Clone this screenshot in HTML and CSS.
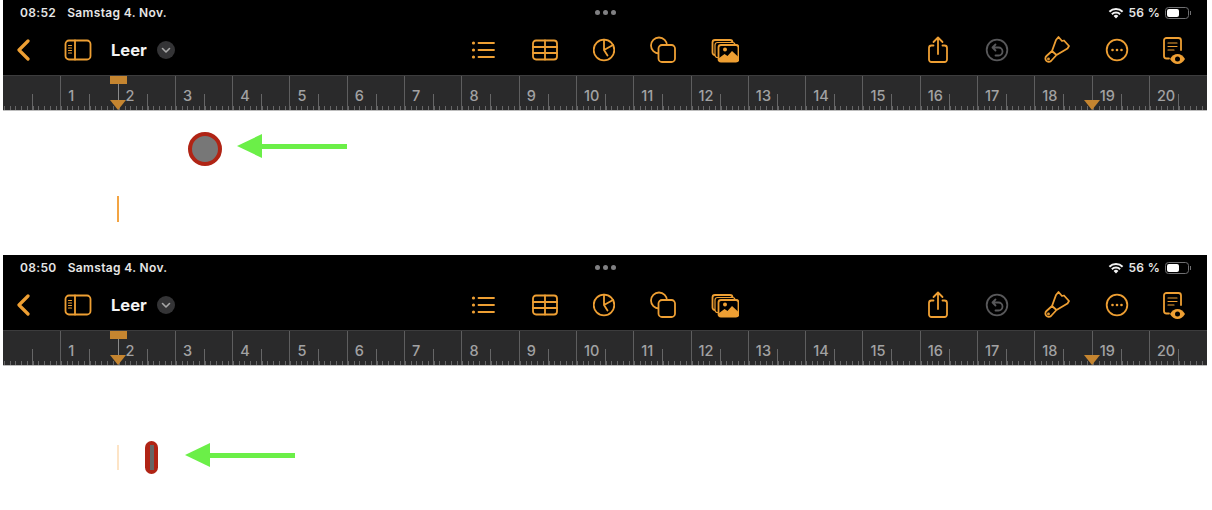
FILE: index.html
```html
<!DOCTYPE html>
<html lang="de">
<head>
<meta charset="utf-8">
<title>Leer</title>
<link rel="stylesheet" href="styles.css">
</head>
<body>
<svg class="defs" aria-hidden="true">
  <symbol id="i-back" viewBox="0 0 14 28"><path class="s3" d="M12 5 3 14l9 9"/></symbol>
  <symbol id="i-side" viewBox="0 0 28 28"><rect class="s" x="1.500" y="4.500" width="25" height="19" rx="3.500"/><path class="s" d="M11 4.500v19"/><path class="s1" d="M4.500 9.500h3M4.500 12h3M4.500 14.500h3M4.500 17h3"/></symbol>
  <symbol id="i-chev" viewBox="0 0 18 18"><circle cx="9" cy="9" r="9" fill="#343436"/><path d="m5.500 7.500 3.500 3.500 3.500-3.500" fill="none" stroke="#a8a8a8" stroke-width="1.600" stroke-linecap="round" stroke-linejoin="round"/></symbol>
  <symbol id="i-list" viewBox="0 0 28 28"><circle class="f" cx="4.500" cy="7" r="1.600"/><circle class="f" cx="4.500" cy="14" r="1.600"/><circle class="f" cx="4.500" cy="21" r="1.600"/><path class="s" d="M9.500 7H25M9.500 14H25M9.500 21H25"/></symbol>
  <symbol id="i-table" viewBox="0 0 26 28"><rect class="s" x="1" y="4.500" width="24" height="19" rx="3"/><path class="s" d="M1 11h24M1 17h24M13 4.500v19"/></symbol>
  <symbol id="i-chart" viewBox="0 0 22 28"><circle class="s" cx="11" cy="14" r="10.300"/><path class="s" d="M11 3.700V14l3.500 5.500M11 14l9-5"/></symbol>
  <symbol id="i-shapes" viewBox="0 0 26 28"><circle class="s" cx="9" cy="9.500" r="8"/><rect class="sb" x="8.500" y="9" width="16.500" height="17" rx="3.500"/></symbol>
  <symbol id="i-media" viewBox="0 0 28 28"><rect class="s" x="1.500" y="4" width="20" height="15" rx="2.500"/><rect class="sb1" x="4" y="6.500" width="20" height="15" rx="2.500"/><rect class="sb" x="7.500" y="9" width="20" height="16.500" rx="2.500"/><circle class="f" cx="14" cy="13.500" r="2"/><path class="f" d="M7.500 22.500 13.500 18l3 2 4.500-5 6.500 6v2a2.500 2.500 0 0 1-2.500 2.500H10a2.500 2.500 0 0 1-2.500-2.500z"/></symbol>
  <symbol id="i-share" viewBox="0 0 26 28"><path class="s" d="M8.500 9.500H6.500a2.500 2.500 0 0 0-2.500 2.500v11.500a2.500 2.500 0 0 0 2.500 2.500h13a2.500 2.500 0 0 0 2.500-2.500V12a2.500 2.500 0 0 0-2.500-2.500h-2M13 18V2M8.500 6 13 1.500 17.500 6"/></symbol>
  <symbol id="i-undo" viewBox="0 0 28 28"><circle class="sg" cx="14" cy="14" r="10.300"/><path class="sg" d="M12.500 8.500 9.500 11.500l3 3M9.500 11.500h6a3.500 3.500 0 0 1 0 8h-3"/></symbol>
  <symbol id="i-brush" viewBox="0 0 28 28"><path class="s" d="M9 15 13 4l2.500-3 3.500 4 2-.500 5 5.500-1.500 2.500-11 6.500zM9 15l-5.500 5a3.200 3.200 0 0 0 4.500 5l5.500-6"/><circle class="s1" cx="5.500" cy="23" r=".8"/></symbol>
  <symbol id="i-more" viewBox="0 0 28 28"><circle class="s" cx="14" cy="14" r="10.300"/><circle class="f" cx="9.500" cy="14" r="1.300"/><circle class="f" cx="14" cy="14" r="1.300"/><circle class="f" cx="18.500" cy="14" r="1.300"/></symbol>
  <symbol id="i-doc" viewBox="0 0 22 28"><path class="s" d="M6 22.500H3.500A2.500 2.500 0 0 1 1 20V4.500A2.500 2.500 0 0 1 3.500 2h12A2.500 2.500 0 0 1 18 4.500V14"/><path class="s1" d="M5 7h9M5 10.500h9M5 14h6"/><path class="f" d="M7 23c2-3.200 4.500-5 7.500-5s5.500 1.800 7.500 5c-2 3.200-4.500 5-7.500 5s-5.500-1.800-7.500-5z"/><circle cx="14.500" cy="23" r="2.500" fill="#000"/></symbol>
  <symbol id="i-wifi" viewBox="0 0 16 12"><path d="M8 11.500 5.600 9a3.400 3.400 0 0 1 4.800 0zM4.500 7.900 3.200 6.600a6.800 6.800 0 0 1 9.600 0l-1.300 1.300a5 5 0 0 0-7 0zM2.100 5.500.7 4.100a10.300 10.300 0 0 1 14.600 0l-1.400 1.400a8.400 8.400 0 0 0-11.800 0z" fill="#f2f2f2"/></symbol>
</svg>

<section class="shot">
  <div class="device">
    <div class="status">
      <div class="status-left"><span>08:52</span><span>Samstag 4. Nov.</span></div>
      <div class="dots"><i></i><i></i><i></i></div>
      <div class="status-right">
        <svg class="wifi"><use href="#i-wifi"/></svg><span>56 %</span>
        <div class="battery"><div class="battery-level"></div></div><div class="battery-nub"></div>
      </div>
    </div>
    <div class="toolbar">
      <div class="tools-left">
        <svg class="w14"><use href="#i-back"/></svg>
        <svg class="w28 side"><use href="#i-side"/></svg>
        <span class="doc-title">Leer</span>
        <svg class="chev"><use href="#i-chev"/></svg>
      </div>
      <div class="tools-center">
        <svg class="w28"><use href="#i-list"/></svg>
        <svg class="w26"><use href="#i-table"/></svg>
        <svg class="w22"><use href="#i-chart"/></svg>
        <svg class="w26"><use href="#i-shapes"/></svg>
        <svg class="w28"><use href="#i-media"/></svg>
      </div>
      <div class="tools-right">
        <svg class="w26"><use href="#i-share"/></svg>
        <svg class="w28"><use href="#i-undo"/></svg>
        <svg class="w28"><use href="#i-brush"/></svg>
        <svg class="w28"><use href="#i-more"/></svg>
        <svg class="w22"><use href="#i-doc"/></svg>
      </div>
    </div>
    <div class="ruler">
      <div class="cell first"></div>
      <div class="cell">1</div><div class="cell">2</div><div class="cell">3</div><div class="cell">4</div><div class="cell">5</div>
      <div class="cell">6</div><div class="cell">7</div><div class="cell">8</div><div class="cell">9</div><div class="cell">10</div>
      <div class="cell">11</div><div class="cell">12</div><div class="cell">13</div><div class="cell">14</div><div class="cell">15</div>
      <div class="cell">16</div><div class="cell">17</div><div class="cell">18</div><div class="cell">19</div><div class="cell">20</div>
      <div class="tab-block"></div>
      <div class="tab-line"></div>
      <div class="marker marker-left"></div>
      <div class="marker marker-right"></div>
    </div>
  </div>
  <div class="caret caret-a"></div>
  <div class="cap cap-round"></div>
  <div class="arrow arrow-a"><div class="arrow-head"></div><div class="arrow-shaft"></div></div>
</section>

<section class="shot">
  <div class="device">
    <div class="status">
      <div class="status-left"><span>08:50</span><span>Samstag 4. Nov.</span></div>
      <div class="dots"><i></i><i></i><i></i></div>
      <div class="status-right">
        <svg class="wifi"><use href="#i-wifi"/></svg><span>56 %</span>
        <div class="battery"><div class="battery-level"></div></div><div class="battery-nub"></div>
      </div>
    </div>
    <div class="toolbar">
      <div class="tools-left">
        <svg class="w14"><use href="#i-back"/></svg>
        <svg class="w28 side"><use href="#i-side"/></svg>
        <span class="doc-title">Leer</span>
        <svg class="chev"><use href="#i-chev"/></svg>
      </div>
      <div class="tools-center">
        <svg class="w28"><use href="#i-list"/></svg>
        <svg class="w26"><use href="#i-table"/></svg>
        <svg class="w22"><use href="#i-chart"/></svg>
        <svg class="w26"><use href="#i-shapes"/></svg>
        <svg class="w28"><use href="#i-media"/></svg>
      </div>
      <div class="tools-right">
        <svg class="w26"><use href="#i-share"/></svg>
        <svg class="w28"><use href="#i-undo"/></svg>
        <svg class="w28"><use href="#i-brush"/></svg>
        <svg class="w28"><use href="#i-more"/></svg>
        <svg class="w22"><use href="#i-doc"/></svg>
      </div>
    </div>
    <div class="ruler">
      <div class="cell first"></div>
      <div class="cell">1</div><div class="cell">2</div><div class="cell">3</div><div class="cell">4</div><div class="cell">5</div>
      <div class="cell">6</div><div class="cell">7</div><div class="cell">8</div><div class="cell">9</div><div class="cell">10</div>
      <div class="cell">11</div><div class="cell">12</div><div class="cell">13</div><div class="cell">14</div><div class="cell">15</div>
      <div class="cell">16</div><div class="cell">17</div><div class="cell">18</div><div class="cell">19</div><div class="cell">20</div>
      <div class="tab-block"></div>
      <div class="tab-line"></div>
      <div class="marker marker-left"></div>
      <div class="marker marker-right"></div>
    </div>
  </div>
  <div class="caret caret-b"></div>
  <div class="cap cap-slim"><div class="cap-core"></div></div>
  <div class="arrow arrow-b"><div class="arrow-head"></div><div class="arrow-shaft"></div></div>
</section>
</body>
</html>
```

FILE: styles.css
```css
* { box-sizing: border-box; }
html, body { margin: 0; padding: 0; background: #fff; overflow: hidden; }
body { font-family: Inter, "Liberation Sans", sans-serif; }

.defs { position: absolute; width: 0; height: 0; }

.f { fill: #ee9f33; }
.s, .s1, .s3, .sb, .sb1, .sg { fill: none; stroke: #ee9f33; stroke-width: 1.800; stroke-linecap: round; stroke-linejoin: round; }
.s1 { stroke-width: 1.200; }
.s3 { stroke-width: 3.200; }
.sb { fill: #000; }
.sb1 { fill: #000; stroke-width: 1.200; }
.sg { stroke: #58585a; }

.shot { position: relative; height: 255px; }
.device { width: 1204px; margin-left: 3px; background: #000; }

.status {
  height: 25px;
  display: grid;
  grid-template-columns: 1fr auto 1fr;
  align-items: center;
  color: #e6e6e6;
  font-size: 12px;
  font-weight: 600;
}
.status-left { display: flex; gap: 11px; padding-left: 17px; letter-spacing: .35px; }
.dots { display: flex; gap: 3px; }
.dots i { display: block; width: 5px; height: 5px; border-radius: 50%; background: #808082; }
.status-right { display: flex; align-items: center; justify-content: flex-end; padding-right: 16px; font-size: 12px; letter-spacing: .3px; }
.wifi { width: 16px; height: 12px; margin-right: 5px; }
.battery { width: 24px; height: 12px; border: 1px solid #707072; border-radius: 3.500px; padding: 1px; margin-left: 5px; }
.battery-level { width: 12px; height: 100%; background: #fff; border-radius: 2px; }
.battery-nub { width: 1px; height: 4px; margin-left: 1px; background: #707072; }

.toolbar {
  height: 50px;
  display: grid;
  grid-template-columns: 466px 1fr auto;
  align-items: center;
}
.toolbar svg { display: block; height: 28px; overflow: visible; }
.w14 { width: 14px; }
.w22 { width: 22px; }
.w26 { width: 26px; }
.w28 { width: 28px; }

.tools-left { display: flex; align-items: center; padding-left: 13px; }
.side { margin-left: 34px; }
.doc-title { margin-left: 19px; color: #f4f4f4; font-size: 16.500px; font-weight: 700; width: 37px; white-space: nowrap; }
.toolbar .chev { width: 18px; height: 18px; margin-left: 9px; }
.tools-center { display: flex; gap: 35px; }
.tools-right { display: flex; gap: 32px; padding-right: 22px; }

.ruler {
  position: relative;
  height: 36px;
  display: flex;
  background: #2a2a2b;
  border-top: 1px solid #3c3c3d;
  border-bottom: 1px solid #bdbdbd;
  overflow: hidden;
}
.cell {
  flex: 0 0 57.300px;
  border-left: 1px solid #5e5e5f;
  padding: 11px 0 0 7px;
  color: #a2a2a3;
  font-size: 14.500px;
  font-weight: 500;
  line-height: 17px;
  background-image:
    linear-gradient(#666667, #666667),
    repeating-linear-gradient(90deg, #666667 0 1px, transparent 1px 5.730px);
  background-repeat: no-repeat;
  background-position: 28px bottom, 0 bottom;
  background-size: 1px 16px, 100% 4px;
}
.first { border-left-color: transparent; }

.tab-block { position: absolute; left: 107px; top: 0; width: 17px; height: 8px; background: #c58530; }
.tab-line { position: absolute; left: 115px; top: 8px; width: 1px; height: 18px; background: #8a8a8a; }
.marker { position: absolute; bottom: 0; width: 0; height: 0; border-left: 8.500px solid transparent; border-right: 8.500px solid transparent; border-top: 10px solid #c58530; }
.marker-left { left: 107px; }
.marker-right { left: 1081px; }

.caret { position: absolute; left: 117px; width: 2px; }
.caret-a { top: 196px; height: 26px; background: #f3a443; }
.caret-b { top: 190px; height: 25px; background: #fde4c6; }

.cap { position: absolute; background: #b02415; }
.cap-round { left: 188px; top: 132px; width: 34px; height: 34px; border-radius: 50%; border: 4px solid #b02415; background: #777; }
.cap-slim { left: 145px; top: 186px; width: 13px; height: 33px; border-radius: 7px; display: flex; justify-content: center; align-items: center; }
.cap-core { width: 4px; height: 25px; background: #666; }

.arrow { position: absolute; display: flex; align-items: center; }
.arrow-a { left: 237px; top: 134px; }
.arrow-b { left: 185px; top: 188px; }
.arrow-head { width: 0; height: 0; border-top: 12.500px solid transparent; border-bottom: 12.500px solid transparent; border-right: 25px solid #6bef48; }
.arrow-shaft { width: 85px; height: 5px; background: #6bef48; }
```
